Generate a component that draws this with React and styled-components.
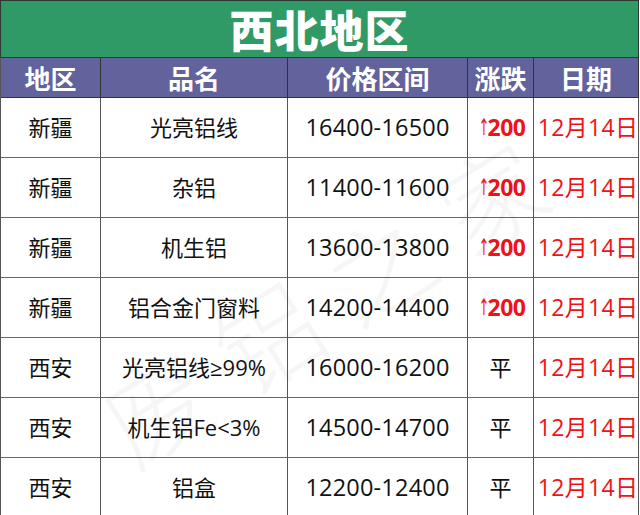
import React from "react";
import styled, { createGlobalStyle } from "styled-components";

const GlobalStyle = createGlobalStyle`
  html, body {
    margin: 0;
    padding: 0;
    background: #ffffff;
  }
  body {
    font-family: "Open Sans", "Noto Sans CJK SC", sans-serif;
  }
`;

const Sheet = styled.div`
  position: relative;
  width: 639px;
  height: 515px;
  overflow: hidden;
  background: #ffffff;
`;

const Title = styled.div`
  height: 57px;
  background: #309a66;
  border: 1px solid #2b3b33;
  border-bottom: none;
  display: flex;
  align-items: center;
  justify-content: center;
  color: #ffffff;
  font-family: "Noto Sans CJK SC", sans-serif;
  font-size: 44px;
  font-weight: 900;
  box-sizing: border-box;
`;

const TitleText = styled.span`
  display: block;
  line-height: 52px;
  letter-spacing: 1px;
`;

const Grid = styled.div`
  display: grid;
  grid-template-columns: 100px 187px 180px 66px 105px;
  grid-template-rows: 40px repeat(7, 60px);
  border-left: 1px solid #555;
  border-top: 1px solid #333;
`;

const Cell = styled.div`
  display: flex;
  align-items: center;
  justify-content: center;
  border-right: 1px solid #555;
  border-bottom: 1px solid #666;
  font-family: "Open Sans", "Noto Sans CJK SC", sans-serif;
  font-size: 22px;
  line-height: 1.2;
  color: ${(p) => (p.red ? "#ef1318" : "#111")};
  font-weight: ${(p) => (p.bold ? 700 : 400)};
  white-space: nowrap;
`;

const Head = styled(Cell)`
  background: #62639c;
  color: #ffffff;
  font-family: "Noto Sans CJK SC", sans-serif;
  font-size: 26px;
  font-weight: 700;
  border-bottom: 1px solid #333;
  border-right-color: #333;
`;

const Num = styled.span`
  font-size: 23.5px;
  letter-spacing: 0.2px;
`;

const DateText = styled.span`
  font-size: 23px;
  letter-spacing: 0.3px;
  margin-left: 4px;
`;

const Arrow = styled.span`
  display: inline-block;
  width: 11px;
  margin-right: 1px;
  font-family: "DejaVu Sans", sans-serif;
  font-weight: 400;
  font-size: 23px;
  text-align: center;
  transform: scaleX(0.55);
`;

const Rise = styled.span`
  font-size: 23px;
  font-weight: 700;
  letter-spacing: -0.5px;
`;

const Watermark = styled.div`
  position: absolute;
  left: 70px;
  top: 240px;
  transform: rotate(-32deg);
  font-family: "Noto Sans CJK SC", serif;
  font-size: 104px;
  line-height: 1;
  font-weight: 300;
  color: rgba(0, 0, 0, 0.035);
  letter-spacing: 28px;
  pointer-events: none;
  white-space: nowrap;
`;

const rows = [
  ["新疆", "光亮铝线", "16400-16500", "up"],
  ["新疆", "杂铝", "11400-11600", "up"],
  ["新疆", "机生铝", "13600-13800", "up"],
  ["新疆", "铝合金门窗料", "14200-14400", "up"],
  ["西安", "光亮铝线≥99%", "16000-16200", "flat"],
  ["西安", "机生铝Fe<3%", "14500-14700", "flat"],
  ["西安", "铝盒", "12200-12400", "flat"],
];

const App = () => (
  <Sheet>
    <GlobalStyle />
    <Title>
      <TitleText>西北地区</TitleText>
    </Title>
    <Grid>
      <Head>地区</Head>
      <Head>品名</Head>
      <Head>价格区间</Head>
      <Head>涨跌</Head>
      <Head>日期</Head>
      {rows.map(([area, name, price, trend], i) => (
        <React.Fragment key={i}>
          <Cell>{area}</Cell>
          <Cell>{name}</Cell>
          <Cell>
            <Num>{price}</Num>
          </Cell>
          {trend === "up" ? (
            <Cell red bold>
              <Arrow>↑</Arrow>
              <Rise>200</Rise>
            </Cell>
          ) : (
            <Cell>平</Cell>
          )}
          <Cell red>
            <DateText>12月14日</DateText>
          </Cell>
        </React.Fragment>
      ))}
    </Grid>
    <Watermark aria-hidden="true">废铝之家</Watermark>
  </Sheet>
);

export default App;
